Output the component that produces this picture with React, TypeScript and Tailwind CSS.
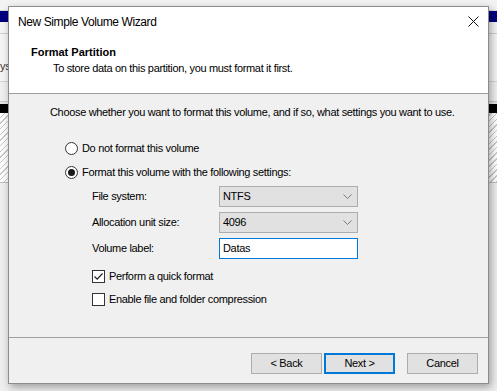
import React from 'react';

const font = { fontFamily: '"Liberation Sans", Arial, sans-serif' };

function Chevron() {
  return (
    <svg width="9" height="5" viewBox="0 0 9 5" className="shrink-0">
      <path d="M0.5 0.5 L4.5 4.5 L8.5 0.5" fill="none" stroke="#7a7a7a" strokeWidth="1" />
    </svg>
  );
}

function Select({ value }: { value: string }) {
  return (
    <div className="flex h-[21px] w-[139px] items-center justify-between border border-[#adadad] bg-[#e1e1e1] pl-[3px] pr-[5px]">
      <span>{value}</span>
      <Chevron />
    </div>
  );
}

function Radio({ checked }: { checked?: boolean }) {
  return (
    <span className="flex size-[13px] items-center justify-center rounded-full border border-[#333] bg-white">
      {checked && <span className="size-[7px] rounded-full bg-[#1a1a1a]" />}
    </span>
  );
}

function Checkbox({ checked }: { checked?: boolean }) {
  return (
    <span className="flex size-[13px] items-center justify-center border border-[#333] bg-white">
      {checked && (
        <svg width="11" height="11" viewBox="0 0 11 11">
          <path d="M1.5 5.5 L4.2 8.2 L9.5 2.5" fill="none" stroke="#222" strokeWidth="1.2" />
        </svg>
      )}
    </span>
  );
}

function Button({ label, primary }: { label: string; primary?: boolean }) {
  return (
    <button
      type="button"
      className={
        'flex h-[21px] w-[71px] items-center justify-center bg-[#e1e1e1] text-[11px] text-black ' +
        (primary ? 'border-2 border-[#0078d7]' : 'border border-[#adadad]')
      }
    >
      {label}
    </button>
  );
}

/** Backdrop: the Disk Management window peeking out behind the wizard. */
function Backdrop() {
  return (
    <div className="flex h-full w-full flex-col bg-[#f0f0f0]">
      <div className="h-[11px] border-b border-[#d9d9d9] bg-[#f3f3f3]" />
      <div className="h-[11px] bg-[#000080]" />
      <div className="h-[12px] border-b border-[#cfcfcf] bg-[#f5f5f5]" />
      <div className="h-[40px] bg-[#f5f5f5] pt-[26px] text-[11px] leading-[13px] text-[#333]">
        <span className="pl-[0px]">ys:</span>
      </div>
      <div className="h-[8px] border-b border-[#d4d4d4] bg-[#f5f5f5]" />
      <div className="h-[20px] border-b border-[#c8c8c8] bg-[#f0f0f0]" />
      <div className="h-[2px] bg-[#e6e6e6]" />
      <div className="h-[9px] bg-black" />
      <div className="h-[70px] border-b border-[#bdbdbd] bg-[repeating-linear-gradient(135deg,#ffffff_0px,#ffffff_3px,#c8c8c8_3px,#c8c8c8_4px)]" />
      <div className="flex-1 bg-[#eeeeee]" />
    </div>
  );
}

export default function App() {
  return (
    <div className="relative h-[391px] w-[497px] overflow-hidden text-[11px] tracking-[-0.33px] text-black" style={font}>
      <Backdrop />

      <div className="absolute left-[8px] top-[6px] flex h-[378px] w-[481px] flex-col border border-[#8c8c8c] bg-[#f0f0f0] shadow-[2px_3px_8px_rgba(0,0,0,0.35)]">
        {/* title bar + header */}
        <div className="flex h-[87px] flex-col border-b border-[#a0a0a0] bg-white">
          <div className="flex h-[29px] items-center justify-between pl-[9px] pr-[9px] text-[12px] tracking-[-0.4px]">
            <span>New Simple Volume Wizard</span>
            <svg width="11" height="11" viewBox="0 0 11 11">
              <path d="M0.5 0.5 L10.5 10.5 M10.5 0.5 L0.5 10.5" stroke="#111" strokeWidth="1" />
            </svg>
          </div>
          <div className="mt-[9px] pl-[22px] font-bold leading-[14px] tracking-normal">Format Partition</div>
          <div className="mt-[2px] pl-[44px] leading-[14px]">
            To store data on this partition, you must format it first.
          </div>
        </div>

        {/* body */}
        <div className="flex flex-1 flex-col">
          <div className="mt-[11px] pl-[41px] leading-[14px]">
            Choose whether you want to format this volume, and if so, what settings you want to use.
          </div>

          <div className="mt-[22px] flex items-center gap-[4px] pl-[56px] leading-[14px]">
            <Radio />
            <span>Do not format this volume</span>
          </div>
          <div className="mt-[10px] flex items-center gap-[4px] pl-[56px] leading-[14px]">
            <Radio checked />
            <span>Format this volume with the following settings:</span>
          </div>

          <div className="mt-[7px] grid grid-cols-[127px_139px] gap-y-[5px] pl-[83px]">
            <span className="self-center">File system:</span>
            <Select value="NTFS" />
            <span className="self-center">Allocation unit size:</span>
            <Select value="4096" />
            <span className="self-center">Volume label:</span>
            <div className="flex h-[21px] items-center border border-[#0078d7] bg-white pl-[3px]">Datas</div>
          </div>

          <div className="mt-[10px] flex items-center gap-[4px] pl-[83px] leading-[14px]">
            <Checkbox checked />
            <span>Perform a quick format</span>
          </div>
          <div className="mt-[9px] flex items-center gap-[4px] pl-[83px] leading-[14px]">
            <Checkbox />
            <span>Enable file and folder compression</span>
          </div>

          <div className="mt-auto border-t border-[#a0a0a0]">
            <div className="flex h-[45px] items-start justify-end pr-[10px] pt-[15px]">
              <Button label="< Back" />
              <span className="w-[2px]" />
              <Button label="Next >" primary />
              <span className="w-[12px]" />
              <Button label="Cancel" />
            </div>
          </div>
        </div>
      </div>
    </div>
  );
}
